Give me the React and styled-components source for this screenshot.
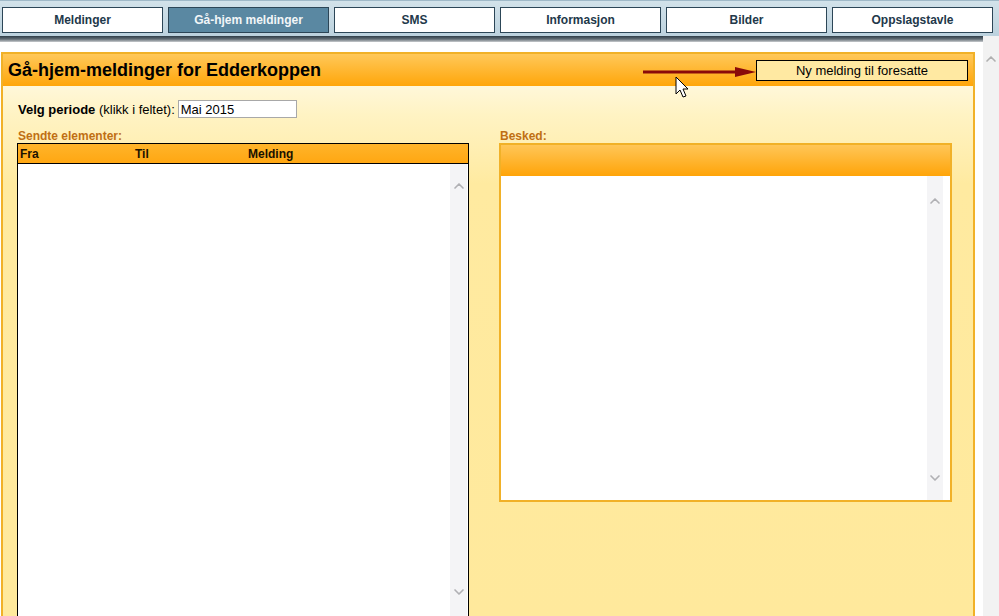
import React from 'react';
import styled, { createGlobalStyle } from 'styled-components';
import { ChevronUp, ChevronDown } from 'lucide-react';

const GlobalStyle = createGlobalStyle`
    body {
        margin: 0;
        font-family: "Liberation Sans", Arial, sans-serif;
        background: #ffffff;
        overflow: hidden;
    }
`;

const Page = styled.div`
    width: 999px;
    height: 616px;
    display: flex;
    flex-direction: column;
    overflow: hidden;
`;

const TopBar = styled.div`
    height: 36px;
    box-sizing: border-box;
    display: flex;
    gap: 5px;
    padding: 6px 6px 0 2px;
    background: linear-gradient(#d2e2ea, #bcd2de);
    border-top: 1px solid #9fb9c8;
`;

const Tab = styled.div`
    flex: 1;
    height: 26px;
    box-sizing: border-box;
    display: flex;
    align-items: center;
    justify-content: center;
    border: 1px solid #2c4657;
    font-size: 12px;
    font-weight: bold;
    color: ${p => (p.active ? '#f2f6f8' : '#22384a')};
    background: ${p => (p.active ? '#5a88a2' : '#ffffff')};
`;

const Below = styled.div`
    flex: 1;
    display: flex;
    min-height: 0;
`;

const Main = styled.div`
    width: 983px;
    display: flex;
    flex-direction: column;
`;

const Shadow = styled.div`
    height: 6px;
    background: linear-gradient(#2e3d48, #5f6a72 50%, #c8cbce);
`;

const PageScroll = styled.div`
    flex: 1;
    background: #f2f2f2;
    display: flex;
    justify-content: center;
    padding-top: 15px;
    color: #b0b0b0;
`;

const Panel = styled.div`
    margin: 10px 0 0 1px;
    width: 974px;
    flex: 1;
    box-sizing: border-box;
    border: 2px solid #f1b128;
    border-bottom: none;
    display: flex;
    flex-direction: column;
    background: linear-gradient(#fffdf2 0px, #fff3c4 60px, #ffeaa0 130px, #ffe99c);
`;

const PanelHeader = styled.div`
    position: relative;
    height: 32px;
    display: flex;
    align-items: center;
    justify-content: space-between;
    padding: 0 5px 0 5px;
    background: linear-gradient(#ffc85a, #ffa60a);
`;

const Title = styled.h1`
    margin: 0;
    font-size: 18px;
    font-weight: bold;
    color: #000000;
`;

const NewButton = styled.div`
    width: 212px;
    height: 21px;
    box-sizing: border-box;
    border: 1px solid #000000;
    background: #ffe9a2;
    display: flex;
    align-items: center;
    justify-content: center;
    font-size: 13px;
    color: #000000;
`;

const Annotation = styled.svg`
    position: absolute;
    left: 638px;
    top: 10px;
    overflow: visible;
`;

const Body = styled.div`
    flex: 1;
    padding: 14px 21px 0 14px;
    display: flex;
    flex-direction: column;
    min-height: 0;
`;

const PeriodRow = styled.div`
    display: flex;
    align-items: center;
    font-size: 13px;
    color: #000000;
    padding-left: 1px;
    gap: 3px;
`;

const PeriodLabel = styled.span`
    font-weight: bold;
`;

const PeriodInput = styled.div`
    width: 119px;
    height: 18px;
    box-sizing: border-box;
    border: 1px solid #a8a8a8;
    background: #ffffff;
    font-size: 13px;
    padding: 1px 2px;
    line-height: 15px;
`;

const Columns = styled.div`
    flex: 1;
    display: flex;
    gap: 30px;
    margin-top: 11px;
    min-height: 0;
`;

const Column = styled.div`
    width: ${p => p.width}px;
    display: flex;
    flex-direction: column;
`;

const SectionLabel = styled.div`
    font-size: 12px;
    font-weight: bold;
    color: #bf6f14;
    padding-left: 1px;
    height: 14px;
    line-height: 14px;
`;

const ListBox = styled.div`
    flex: 1;
    border: 1px solid #000000;
    border-bottom: none;
    display: flex;
    flex-direction: column;
    background: #ffffff;
`;

const ListHeader = styled.div`
    height: 19px;
    display: grid;
    grid-template-columns: 115px 113px 1fr;
    align-items: center;
    padding-left: 2px;
    border-bottom: 1px solid #000000;
    background: linear-gradient(#ffb42a, #ffa712);
    font-size: 12px;
    font-weight: bold;
    color: #1a1200;
`;

const ScrollArea = styled.div`
    flex: 1;
    display: flex;
    justify-content: flex-end;
    padding-right: ${p => p.inset}px;
`;

const ScrollTrack = styled.div`
    width: ${p => p.width}px;
    background: #f4f4f6;
    display: flex;
    flex-direction: column;
    justify-content: space-between;
    align-items: center;
    padding: ${p => p.pad};
    color: #b0b0b4;
`;

const MessageBox = styled.div`
    height: 359px;
    box-sizing: border-box;
    border: 2px solid #f1b128;
    display: flex;
    flex-direction: column;
    background: #ffffff;
`;

const MessageHeader = styled.div`
    height: 31px;
    background: linear-gradient(#ffc658, #ffa408);
`;

const tabs = ['Meldinger', 'Gå-hjem meldinger', 'SMS', 'Informasjon', 'Bilder', 'Oppslagstavle'];

const App = () => (
    <Page>
        <GlobalStyle />
        <TopBar>
            {tabs.map(t => (
                <Tab key={t} active={t === 'Gå-hjem meldinger'}>
                    {t}
                </Tab>
            ))}
        </TopBar>
        <Below>
            <Main>
                <Shadow />
                <Panel>
                    <PanelHeader>
                        <Title>Gå-hjem-meldinger for Edderkoppen</Title>
                        <NewButton>Ny melding til foresatte</NewButton>
                        <Annotation width="120" height="40">
                            {/* red arrow pointing at the button */}
                            <line x1="2" y1="8" x2="98" y2="8" stroke="#8a0a0a" strokeWidth="3" />
                            <polygon points="94,3 115,8 94,13" fill="#8a0a0a" />
                            {/* mouse pointer */}
                            <path
                                d="M35 13 L35 30 L39 26 L42 33 L45 32 L42 25 L47 25 Z"
                                fill="#ffffff"
                                stroke="#000000"
                                strokeWidth="1"
                                strokeLinejoin="round"
                            />
                        </Annotation>
                    </PanelHeader>
                    <Body>
                        <PeriodRow>
                            <span>
                                <PeriodLabel>Velg periode</PeriodLabel> (klikk i feltet):
                            </span>
                            <PeriodInput>Mai 2015</PeriodInput>
                        </PeriodRow>
                        <Columns>
                            <Column width={452}>
                                <SectionLabel>Sendte elementer:</SectionLabel>
                                <ListBox>
                                    <ListHeader>
                                        <span>Fra</span>
                                        <span>Til</span>
                                        <span>Melding</span>
                                    </ListHeader>
                                    <ScrollArea inset={1}>
                                        <ScrollTrack width={17} pad="14px 0 16px">
                                            <ChevronUp size={16} strokeWidth={2.5} />
                                            <ChevronDown size={16} strokeWidth={2.5} />
                                        </ScrollTrack>
                                    </ScrollArea>
                                </ListBox>
                            </Column>
                            <Column width={453}>
                                <SectionLabel>Besked:</SectionLabel>
                                <MessageBox>
                                    <MessageHeader />
                                    <ScrollArea inset={7}>
                                        <ScrollTrack width={16} pad="17px 0 14px">
                                            <ChevronUp size={16} strokeWidth={2.5} />
                                            <ChevronDown size={16} strokeWidth={2.5} />
                                        </ScrollTrack>
                                    </ScrollArea>
                                </MessageBox>
                            </Column>
                        </Columns>
                    </Body>
                </Panel>
            </Main>
            <PageScroll>
                <ChevronUp size={16} strokeWidth={2.5} />
            </PageScroll>
        </Below>
    </Page>
);

export default App;
